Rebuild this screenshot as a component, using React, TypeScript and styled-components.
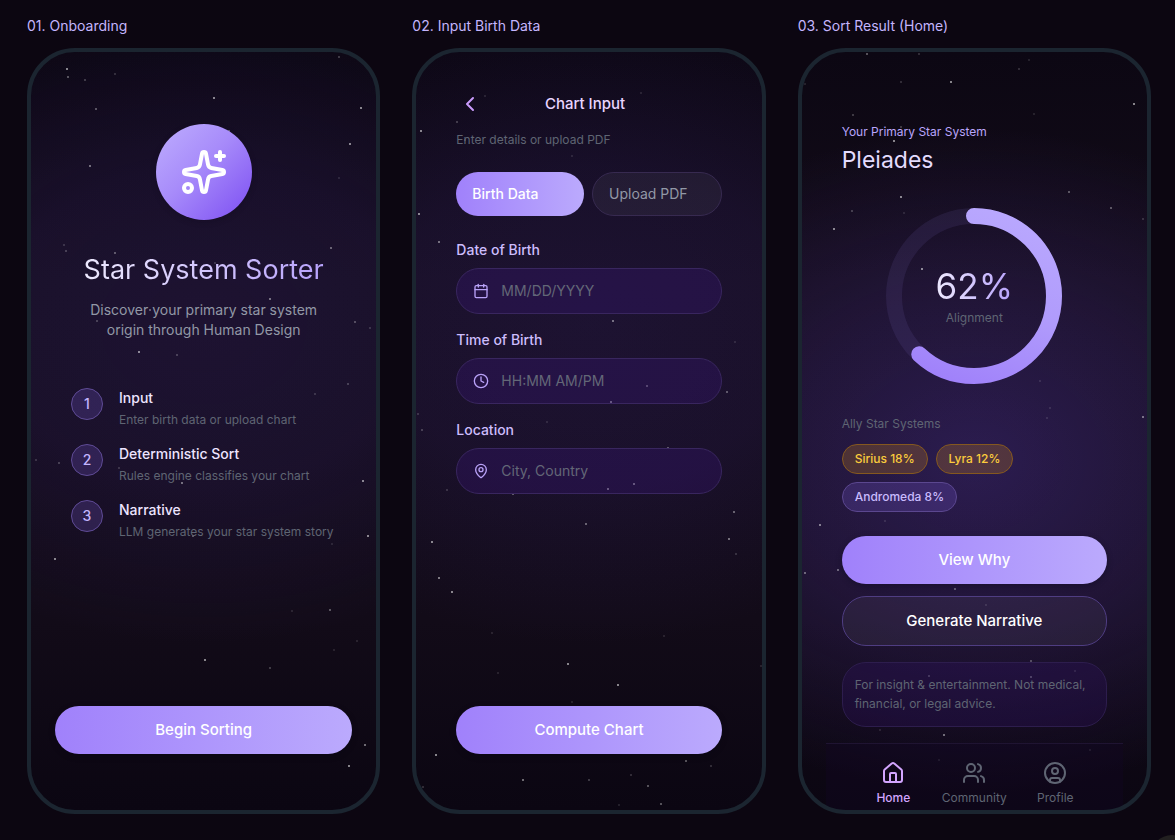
import React from "react";
import styled, { createGlobalStyle, css } from "styled-components";
import {
  Calendar,
  ChevronLeft,
  CircleUser,
  Clock,
  House,
  MapPin,
  Sparkles,
  Users,
} from "lucide-react";

const GlobalStyle = createGlobalStyle`
  *, *::before, *::after { box-sizing: border-box; }
  body {
    margin: 0;
    background: #0c0611;
    color: #f3e8ff;
    font-family: Inter, "Liberation Sans", sans-serif;
    font-size: 14px;
    line-height: 20px;
  }
  h1, h2, h3, p, ol, ul { margin: 0; padding: 0; font-weight: 400; }
  ol, ul { list-style: none; }
  button, input { font: inherit; color: inherit; }
  svg { display: block; flex: none; }
`;

const Board = styled.main`
  display: grid;
  grid-template-columns: repeat(3, minmax(0, 1fr));
  gap: 32px;
  min-height: 100vh;
  padding: 16px 24px 26px 27px;
`;

const Screen = styled.section`
  display: flex;
  flex-direction: column;
  gap: 12px;
`;

const ScreenLabel = styled.h2`
  font-size: 14px;
  line-height: 20px;
  color: #c4b5fd;
`;

const glow = {
  soft: "radial-gradient(ellipse 120% 42% at 50% 36%, rgba(62, 40, 128, 0.24), rgba(62, 40, 128, 0.18) 50%, transparent)",
  bright:
    "radial-gradient(ellipse 120% 44% at 50% 54%, rgba(84, 55, 170, 0.38), rgba(78, 50, 150, 0.24) 50%, transparent)",
};

const Phone = styled.div<{ $glow: keyof typeof glow }>`
  position: relative;
  flex: 1;
  display: flex;
  flex-direction: column;
  overflow: hidden;
  border: 4px solid #1b2530;
  border-radius: 48px;
  background: ${(p) => glow[p.$glow]},
    linear-gradient(#0c0713, #130c19 30%, #120b18 75%, #0b0612);
`;

const Sky = styled.svg`
  position: absolute;
  inset: 0;
  width: 100%;
  height: 100%;
`;

const Content = styled.div<{ $top: number; $bottom: number }>`
  position: relative;
  flex: 1;
  display: flex;
  flex-direction: column;
  padding: ${(p) => p.$top}px 40px ${(p) => p.$bottom}px;
`;

const pill = css`
  border-radius: 24px;
  cursor: pointer;
`;

const PrimaryButton = styled.button`
  ${pill}
  height: 48px;
  flex: none;
  border: 0;
  background: linear-gradient(90deg, #a081fb, #bbaafd);
  color: #fff;
  font-size: 15px;
  font-weight: 500;
  box-shadow: 0 2px 6px rgba(8, 4, 20, 0.3);
`;

const SecondaryButton = styled.button`
  ${pill}
  height: 50px;
  flex: none;
  border: 1px solid #4f3d82;
  background: rgba(255, 255, 255, 0.05);
  color: #fff;
  font-size: 15px;
  font-weight: 500;
`;

const Footer = styled.div`
  display: flex;
  flex-direction: column;
  margin-top: auto;
`;

const WideFooter = styled(Footer)`
  margin-left: -16px;
  margin-right: -16px;
`;

const HelpButton = styled.button`
  position: fixed;
  right: -19px;
  bottom: -39px;
  width: 44px;
  height: 44px;
  border: 0;
  border-radius: 50%;
  background: #222020;
`;

/* Onboarding */

const Emblem = styled.div`
  display: grid;
  place-items: center;
  align-self: center;
  width: 96px;
  height: 96px;
  margin-bottom: 32px;
  border-radius: 50%;
  background: linear-gradient(135deg, #b9a6fd 10%, #a78bfa 45%, #7c4df2);
  color: #fff;
  box-shadow: 0 2px 6px rgba(8, 4, 20, 0.2);
`;

const gradientText = css`
  background: linear-gradient(90deg, #ede9fe, #b7a2fc);
  background-clip: text;
  -webkit-background-clip: text;
  color: transparent;
`;

const AppTitle = styled.h1`
  ${gradientText}
  align-self: center;
  margin-bottom: 12px;
  font-size: 27px;
  line-height: 36px;
  white-space: nowrap;
`;

const Tagline = styled.p`
  align-self: center;
  max-width: 240px;
  margin-bottom: 48px;
  color: #9298a6;
  text-align: center;
`;

const Steps = styled.ol`
  display: flex;
  flex-direction: column;
  gap: 16px;
`;

const Step = styled.li`
  display: flex;
  gap: 16px;
`;

const StepNumber = styled.span`
  display: grid;
  place-items: center;
  flex: none;
  width: 32px;
  height: 32px;
  border: 1px solid #5f4b96;
  border-radius: 50%;
  background: rgba(139, 106, 246, 0.2);
  color: #c4b5fd;
  font-weight: 500;
`;

const StepText = styled.div`
  display: flex;
  flex-direction: column;
  gap: 4px;
`;

const StepTitle = styled.h3`
  font-size: 14px;
  line-height: 20px;
  font-weight: 500;
  color: #ede4ff;
`;

const Muted = styled.p`
  font-size: 12px;
  line-height: 16px;
  white-space: nowrap;
  color: #5f6573;
`;

/* Birth data form */

const TopBar = styled.header`
  display: flex;
  align-items: center;
  justify-content: space-between;
  height: 32px;
  margin-bottom: 12px;
`;

const BackButton = styled.button`
  display: grid;
  place-items: center;
  width: 28px;
  height: 28px;
  padding: 0;
  border: 0;
  background: none;
  color: #c99bfb;
  cursor: pointer;
`;

const TopBarSpacer = styled.span`
  width: 36px;
`;

const TopBarTitle = styled.h1`
  font-size: 15px;
  line-height: 24px;
  font-weight: 500;
  color: #e9d5ff;
`;

const Tabs = styled.div`
  display: flex;
  gap: 8px;
  height: 44px;
  margin: 24px 0;
`;

const Tab = styled.button<{ $active?: boolean }>`
  ${pill}
  flex: 1 1 0;
  padding: 0 16px;
  text-align: left;
  ${(p) =>
    p.$active
      ? css`
          border: 0;
          background: linear-gradient(90deg, #a081fb, #bbaafd);
          color: #fff;
          font-weight: 500;
        `
      : css`
          border: 1px solid #372a50;
          background: rgba(255, 255, 255, 0.05);
          color: #9298a6;
        `}
`;

const Form = styled.form`
  display: flex;
  flex-direction: column;
  gap: 16px;
`;

const Field = styled.label`
  display: flex;
  flex-direction: column;
  gap: 8px;
  color: #cdbdfd;
  font-weight: 500;
`;

const InputShell = styled.span`
  display: flex;
  align-items: center;
  gap: 12px;
  height: 46px;
  padding: 0 16px;
  border: 1px solid #39265f;
  border-radius: 24px;
  background: rgba(60, 20, 130, 0.28);
  color: #b9a2f8;
`;

const Input = styled.input`
  flex: 1;
  min-width: 0;
  padding: 0;
  border: 0;
  outline: 0;
  background: none;
  font-weight: 400;
  &::placeholder {
    color: #636777;
    opacity: 1;
  }
`;

/* Result */

const Eyebrow = styled.p`
  margin-bottom: 4px;
  font-size: 12px;
  line-height: 16px;
  color: #b9a5fb;
`;

const SystemName = styled.h1`
  font-size: 23px;
  line-height: 32px;
  color: #e4dcfe;
`;

const Gauge = styled.div`
  display: grid;
  place-items: center;
  margin: 32px 0;
  & > * {
    grid-area: 1 / 1;
  }
`;

const GaugeText = styled.div`
  display: flex;
  flex-direction: column;
  align-items: center;
  gap: 4px;
`;

const GaugeValue = styled.strong`
  ${gradientText}
  font-size: 35px;
  line-height: 40px;
  font-weight: 400;
`;

const Chips = styled.ul`
  display: flex;
  flex-wrap: wrap;
  gap: 8px;
  margin: 12px 0 24px;
`;

const Chip = styled.li<{ $gold?: boolean }>`
  height: 30px;
  padding: 0 12px;
  border: 1px solid ${(p) => (p.$gold ? "#85581f" : "#5b478f")};
  border-radius: 16px;
  background: ${(p) => (p.$gold ? "rgba(245, 158, 11, 0.2)" : "rgba(139, 106, 246, 0.2)")};
  color: ${(p) => (p.$gold ? "#fbcb3c" : "#c9bbfd")};
  font-size: 12px;
  line-height: 28px;
  font-weight: 500;
`;

const Actions = styled.div`
  display: flex;
  flex-direction: column;
  gap: 12px;
`;

const Disclaimer = styled.p`
  margin: 16px 0;
  padding: 12px 12px 13px;
  border: 1px solid #2d1d4d;
  border-radius: 24px;
  background: rgba(60, 20, 130, 0.2);
  color: #5f6573;
  font-size: 12px;
  line-height: 19px;
`;

const TabBar = styled.nav`
  display: flex;
  justify-content: center;
  gap: 16px;
  flex: 1;
  margin: 0 -16px;
  padding-top: 17px;
  border-top: 1px solid #1f1432;
  background: rgba(20, 8, 40, 0.3);
`;

const TabLink = styled.a<{ $active?: boolean }>`
  display: flex;
  flex-direction: column;
  align-items: center;
  gap: 5px;
  width: 65px;
  color: ${(p) => (p.$active ? "#d3a5ff" : "#5f6573")};
  font-size: 12px;
  line-height: 16px;
  font-weight: ${(p) => (p.$active ? 500 : 400)};
  text-decoration: none;
`;

/* Each star is [x, y, opacity], measured from the inside corner of the phone. */
type Star = [number, number, number];

const onboardingStars: Star[] = [
  [35, 16, 0.5], [36, 24, 0.3], [53, 27, 0.2], [83, 21, 0.15], [64, 56, 0.3],
  [182, 45, 0.5], [307, 4, 0.2], [329, 55, 0.5], [318, 91, 0.5], [58, 113, 0.4],
  [307, 125, 0.1], [197, 78, 0.3], [32, 192, 0.15], [34, 198, 0.2], [83, 200, 0.3],
  [299, 195, 0.35], [183, 210, 0.15], [238, 246, 0.4], [118, 257, 0.3], [65, 268, 0.2],
  [323, 269, 0.25], [338, 275, 0.15], [107, 299, 0.5], [145, 302, 0.2], [316, 331, 0.2],
  [283, 341, 0.15], [4, 407, 0.15], [27, 410, 0.2], [87, 415, 0.15], [150, 430, 0.4],
  [331, 428, 0.5], [336, 483, 0.5], [161, 483, 0.3], [300, 491, 0.1], [23, 506, 0.5],
  [260, 558, 0.1], [298, 557, 0.3], [325, 588, 0.1], [302, 597, 0.1], [173, 607, 0.5],
  [238, 615, 0.2], [333, 692, 0.4], [317, 713, 0.5],
];

const birthDataStars: Star[] = [
  [68, 43, 0.1], [224, 40, 0.1], [40, 69, 0.2], [4, 78, 0.5], [155, 103, 0.1],
  [2, 161, 0.5], [48, 87, 0.2], [175, 54, 0.15], [22, 189, 0.4], [118, 242, 0.3],
  [196, 268, 0.4], [318, 289, 0.1], [230, 333, 0.3], [310, 339, 0.3], [194, 349, 0.4],
  [1, 361, 0.15], [5, 377, 0.2], [130, 369, 0.1], [251, 395, 0.3], [217, 431, 0.4],
  [191, 436, 0.4], [30, 437, 0.15], [96, 441, 0.3], [317, 459, 0.35], [169, 471, 0.35],
  [15, 489, 0.5], [312, 486, 0.4], [319, 501, 0.15], [22, 525, 0.45], [35, 539, 0.5],
  [75, 580, 0.1], [247, 583, 0.1], [151, 611, 0.5], [81, 620, 0.1], [344, 613, 0.1],
  [201, 632, 0.5], [155, 649, 0.1], [19, 702, 0.5], [269, 708, 0.3], [294, 713, 0.15],
  [214, 722, 0.15], [172, 727, 0.2], [106, 727, 0.4], [231, 733, 0.3], [6, 734, 0.15],
  [202, 752, 0.1], [244, 751, 0.3],
];

const resultStars: Star[] = [
  [64, 1, 0.3], [116, 1, 0.15], [226, 7, 0.1], [216, 16, 0.15], [98, 29, 0.15],
  [148, 29, 0.5], [2, 31, 0.1], [331, 51, 0.5], [50, 62, 0.2], [231, 61, 0.1],
  [98, 74, 0.2], [91, 88, 0.5], [98, 144, 0.5], [266, 139, 0.3], [49, 158, 0.2],
  [101, 160, 0.1], [308, 155, 0.3], [31, 176, 0.5], [340, 166, 0.15], [119, 216, 0.5],
  [160, 273, 0.1], [237, 328, 0.1], [247, 355, 0.1], [244, 365, 0.1], [340, 364, 0.4],
  [17, 472, 0.45], [82, 468, 0.1], [2, 520, 0.35], [35, 517, 0.35], [152, 536, 0.3],
  [183, 552, 0.1], [228, 608, 0.25], [272, 618, 0.1], [126, 623, 0.2], [228, 624, 0.25],
  [77, 677, 0.1], [141, 682, 0.4], [287, 697, 0.1], [136, 707, 0.1],
];

function Starfield({ stars }: { stars: Star[] }) {
  return (
    <Sky aria-hidden="true">
      {stars.map(([x, y, opacity]) => (
        <rect key={`${x}-${y}`} x={x} y={y} width="2" height="2" fill="#fff" fillOpacity={opacity} />
      ))}
    </Sky>
  );
}

function AlignmentRing({ percent }: { percent: number }) {
  return (
    <svg width="176" height="176" viewBox="0 0 176 176" fill="none" aria-hidden="true">
      <defs>
        <linearGradient id="ring" gradientUnits="userSpaceOnUse" x1="176" y1="118" x2="0" y2="58">
          <stop offset="0" stopColor="#b9a8fe" />
          <stop offset="0.5" stopColor="#b09bfc" />
          <stop offset="1" stopColor="#9f80fa" />
        </linearGradient>
      </defs>
      <circle cx="88" cy="88" r="80" stroke="#a78bfa" strokeOpacity="0.09" strokeWidth="16" />
      <circle
        cx="88"
        cy="88"
        r="80"
        stroke="url(#ring)"
        strokeWidth="16"
        strokeLinecap="round"
        pathLength="100"
        strokeDasharray={`${percent} 100`}
        transform="rotate(-90 88 88)"
      />
    </svg>
  );
}

const steps = [
  { title: "Input", text: "Enter birth data or upload chart" },
  { title: "Deterministic Sort", text: "Rules engine classifies your chart" },
  { title: "Narrative", text: "LLM generates your star system story" },
];

const fields = [
  { label: "Date of Birth", placeholder: "MM/DD/YYYY", Icon: Calendar },
  { label: "Time of Birth", placeholder: "HH:MM AM/PM", Icon: Clock },
  { label: "Location", placeholder: "City, Country", Icon: MapPin },
];

const allies = [
  { name: "Sirius 18%", gold: true },
  { name: "Lyra 12%", gold: true },
  { name: "Andromeda 8%", gold: false },
];

const tabs = [
  { label: "Home", Icon: House },
  { label: "Community", Icon: Users },
  { label: "Profile", Icon: CircleUser },
];

function Onboarding() {
  return (
    <Phone $glow="soft">
      <Starfield stars={onboardingStars} />
      <Content $top={72} $bottom={56}>
        <Emblem>
          <Sparkles size={48} />
        </Emblem>
        <AppTitle>Star System Sorter</AppTitle>
        <Tagline>Discover your primary star system origin through Human Design</Tagline>
        <Steps>
          {steps.map((step, i) => (
            <Step key={step.title}>
              <StepNumber>{i + 1}</StepNumber>
              <StepText>
                <StepTitle>{step.title}</StepTitle>
                <Muted>{step.text}</Muted>
              </StepText>
            </Step>
          ))}
        </Steps>
        <WideFooter>
          <PrimaryButton type="button">Begin Sorting</PrimaryButton>
        </WideFooter>
      </Content>
    </Phone>
  );
}

function BirthData() {
  return (
    <Phone $glow="soft">
      <Starfield stars={birthDataStars} />
      <Content $top={36} $bottom={56}>
        <TopBar>
          <BackButton type="button" aria-label="Back">
            <ChevronLeft size={24} />
          </BackButton>
          <TopBarTitle>Chart Input</TopBarTitle>
          <TopBarSpacer />
        </TopBar>
        <Muted>Enter details or upload PDF</Muted>
        <Tabs>
          <Tab type="button" $active>
            Birth Data
          </Tab>
          <Tab type="button">Upload PDF</Tab>
        </Tabs>
        <Form id="birth-data">
          {fields.map(({ label, placeholder, Icon }) => (
            <Field key={label}>
              {label}
              <InputShell>
                <Icon size={16} />
                <Input type="text" placeholder={placeholder} />
              </InputShell>
            </Field>
          ))}
        </Form>
        <Footer>
          <PrimaryButton type="button">Compute Chart</PrimaryButton>
        </Footer>
      </Content>
    </Phone>
  );
}

function SortResult() {
  return (
    <Phone $glow="bright">
      <Starfield stars={resultStars} />
      <Content $top={72} $bottom={0}>
        <Eyebrow>Your Primary Star System</Eyebrow>
        <SystemName>Pleiades</SystemName>
        <Gauge>
          <AlignmentRing percent={62} />
          <GaugeText>
            <GaugeValue>62%</GaugeValue>
            <Muted>Alignment</Muted>
          </GaugeText>
        </Gauge>
        <Muted>Ally Star Systems</Muted>
        <Chips>
          {allies.map((ally) => (
            <Chip key={ally.name} $gold={ally.gold}>
              {ally.name}
            </Chip>
          ))}
        </Chips>
        <Actions>
          <PrimaryButton type="button">View Why</PrimaryButton>
          <SecondaryButton type="button">Generate Narrative</SecondaryButton>
        </Actions>
        <Disclaimer>
          For insight &amp; entertainment. Not medical, financial, or legal advice.
        </Disclaimer>
        <TabBar>
          {tabs.map(({ label, Icon }, i) => (
            <TabLink key={label} href="#" $active={i === 0}>
              <Icon size={24} />
              {label}
            </TabLink>
          ))}
        </TabBar>
      </Content>
    </Phone>
  );
}

export default function App() {
  return (
    <>
      <GlobalStyle />
      <Board>
        <Screen>
          <ScreenLabel>01. Onboarding</ScreenLabel>
          <Onboarding />
        </Screen>
        <Screen>
          <ScreenLabel>02. Input Birth Data</ScreenLabel>
          <BirthData />
        </Screen>
        <Screen>
          <ScreenLabel>03. Sort Result (Home)</ScreenLabel>
          <SortResult />
        </Screen>
      </Board>
      <HelpButton type="button" aria-label="Help" />
    </>
  );
}
